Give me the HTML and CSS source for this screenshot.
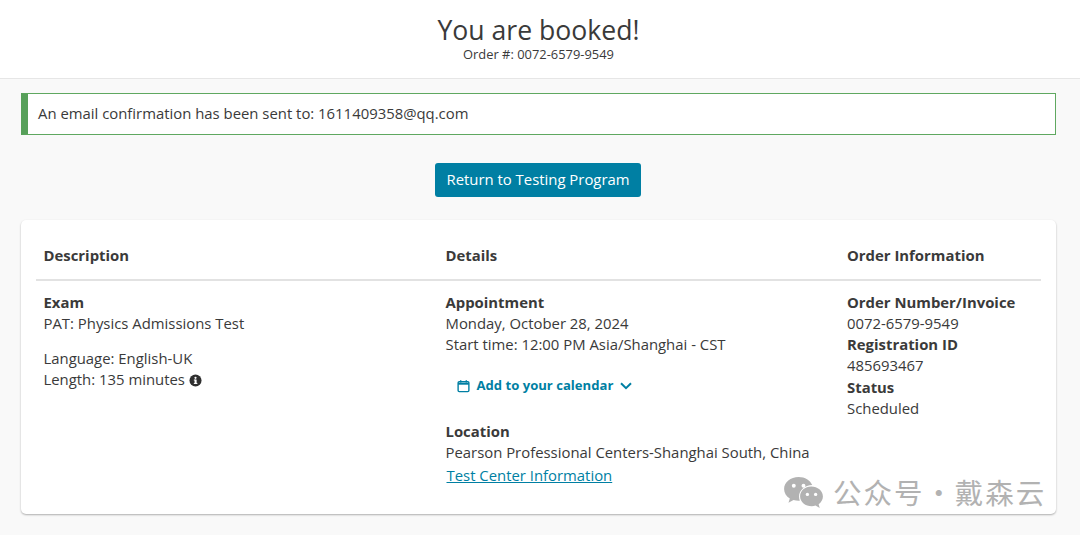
FILE: index.html
```html
<!DOCTYPE html>
<html lang="en">
<head>
<meta charset="utf-8">
<title>You are booked!</title>
<link rel="stylesheet" href="styles.css">
</head>
<body>
<header class="top">
  <h1 class="title">You are booked!</h1>
  <div class="order">Order #: 0072-6579-9549</div>
</header>
<main class="content">
  <div class="alert">An email confirmation has been sent to: 1611409358@qq.com</div>
  <div class="action"><a class="btn">Return to Testing Program</a></div>
  <section class="card">
    <div class="grid">
      <div class="head">Description</div>
      <div class="head">Details</div>
      <div class="head">Order Information</div>
      <div class="rule"></div>
      <div class="cell">
        <div class="b">Exam</div>
        <div>PAT: Physics Admissions Test</div>
        <div class="gap">Language: English-UK</div>
        <div class="len">Length: 135 minutes
          <svg class="info" viewBox="0 0 14 14" width="13" height="13"><circle cx="7" cy="7" r="6.500" fill="#2f2f2f"/><rect x="6" y="6" width="2.200" height="4.400" fill="#fff"/><rect x="5.200" y="9.600" width="3.800" height="1.100" fill="#fff"/><rect x="5.200" y="6" width="2" height="1" fill="#fff"/><circle cx="7" cy="4.100" r="1.200" fill="#fff"/></svg>
        </div>
      </div>
      <div class="cell">
        <div class="b">Appointment</div>
        <div>Monday, October 28, 2024</div>
        <div>Start time: 12:00 PM Asia/Shanghai - CST</div>
        <div class="cal">
          <svg viewBox="0 0 14 14" width="13" height="14"><rect x="1.200" y="2.400" width="11.600" height="10.600" rx="1.200" fill="none" stroke="#007fa3" stroke-width="1.500"/><path d="M1.200 4.600h11.600" stroke="#007fa3" stroke-width="2"/><path d="M4 .8v2.400M10 .8v2.400" stroke="#007fa3" stroke-width="1.500"/></svg>
          <span>Add to your calendar</span>
          <svg viewBox="0 0 12 8" width="12" height="8"><path d="M1 1.200 6 6.200 11 1.200" fill="none" stroke="#007fa3" stroke-width="2"/></svg>
        </div>
        <div class="b">Location</div>
        <div>Pearson Professional Centers-Shanghai South, China</div>
        <a class="link">Test Center Information</a>
      </div>
      <div class="cell">
        <div class="b">Order Number/Invoice</div>
        <div>0072-6579-9549</div>
        <div class="b">Registration ID</div>
        <div>485693467</div>
        <div class="b">Status</div>
        <div>Scheduled</div>
      </div>
    </div>
  </section>
</main>
<div class="mark">
  <svg viewBox="0 0 42 34" width="41" height="33"><path d="M16 1C7.700 1 1 6.500 1 13.300c0 4 2.300 7.500 5.900 9.800L5.500 27.500l5.200-2.700c1.700.5 3.500.8 5.300.8h1.200C16.700 24.200 16.400 22.700 16.400 21.200c0-6.400 6-11.500 13.600-11.800C28 4.500 22.500 1 16 1Z" fill="#b2b2b2"/><path d="M41 21c0-5.600-5.500-10.100-12-10.100S17.500 15.400 17.500 21 23 31.100 29.500 31.100c1.300 0 2.700-.2 3.900-.6l4.300 2.400-1.100-3.900C39.200 27.100 41 24.200 41 21Z" fill="#b2b2b2"/><circle cx="11" cy="10" r="2" fill="#fff"/><circle cx="21" cy="10" r="2" fill="#fff"/><circle cx="25" cy="19" r="1.700" fill="#fff"/><circle cx="33.500" cy="19" r="1.700" fill="#fff"/></svg>
  <span>公众号 · 戴森云</span>
</div>
</body>
</html>
```
FILE: styles.css
```css
* { box-sizing: border-box; }
html, body { margin: 0; height: 535px; overflow: hidden; }
body {
  position: relative;
  background: #f9f9f9;
  color: #3a3a3a;
  font-family: "Open Sans", sans-serif;
  font-size: 14.880px;
  line-height: 21.300px;
}
.top {
  height: 79px;
  background: #fff;
  border-bottom: 1px solid #e6e6e6;
  text-align: center;
  padding-top: 12.500px;
  padding-right: 3px;
}
.title {
  margin: 0;
  font-size: 26.600px;
  line-height: 34px;
  font-weight: 400;
}
.order { font-size: 12.900px; line-height: 15px; margin-top: 0.500px; }
.content { padding: 14px 24px 0 21px; }
.alert {
  height: 42px;
  background: #fff;
  border: 1px solid #5fa860;
  border-left: 7px solid #57a05a;
  padding: 8px 10px;
  line-height: 22px;
}
.action { display: flex; justify-content: center; margin-top: 28px; padding-right: 1px; }
.btn {
  display: block;
  height: 34px;
  padding: 5px 11.500px;
  background: #007fa3;
  color: #fff;
  border-radius: 3px;
  line-height: 22px;
}
.card {
  margin-top: 23px;
  height: 294px;
  background: #fff;
  border-radius: 5px;
  box-shadow: 0 1px 2px rgba(0,0,0,.3);
  padding: 0 15px;
}
.grid { display: grid; grid-template-columns: 402px 401.500px 1fr; }
.head { padding: 25px 7.500px 12px; font-weight: 700; line-height: 21px; height: 59px; }
.rule { grid-column: 1 / -1; height: 2px; background: #e2e2e2; }
.cell { padding: 10.500px 7.500px 0; }
.b { font-weight: 700; }
.gap { margin-top: 13.500px; }
.len { display: flex; align-items: center; gap: 4px; }
.info { margin-top: 1px; }
.cal {
  display: flex;
  align-items: center;
  gap: 7px;
  margin: 20px 0 24.500px 11px;
  height: 21px;
  color: #007fa3;
  font-weight: 700;
  font-size: 13.100px;
}
.link { display: block; margin-left: 1px; color: #007fa3; text-decoration: underline; line-height: 24px; }
.mark {
  position: absolute;
  left: 783px;
  top: 474px;
  display: flex;
  align-items: center;
  gap: 9px;
  color: #b2b2b2;
  font-family: "Noto Sans CJK SC", sans-serif;
  font-size: 28.500px;
  letter-spacing: 2px;
  word-spacing: -8.500px;
  line-height: 36px;
  white-space: nowrap;
}
```
